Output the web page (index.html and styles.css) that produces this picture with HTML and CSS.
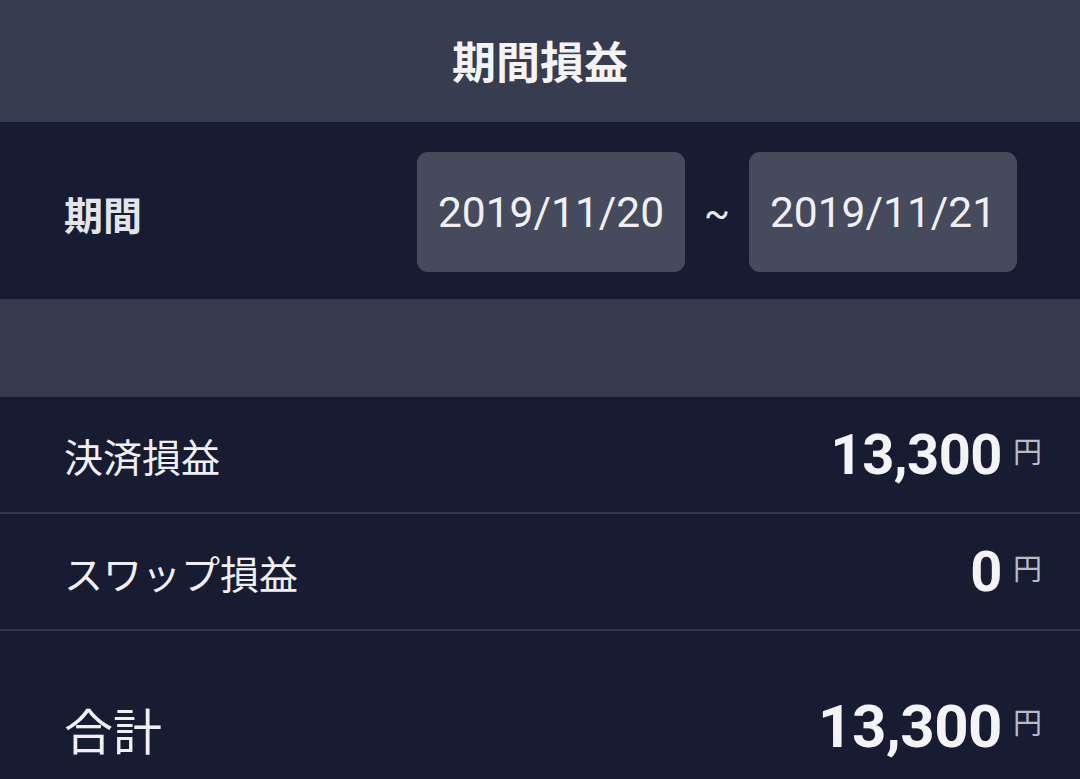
FILE: index.html
```html
<!DOCTYPE html>
<html lang="ja">
<head>
<meta charset="utf-8">
<link rel="stylesheet" href="styles.css">
</head>
<body>
<div class="page">
  <header class="header"><h1 class="title">期間損益</h1></header>
  <section class="period">
    <div class="period-label">期間</div>
    <div class="dates">
      <div class="date-box">2019/11/20</div>
      <div class="tilde">~</div>
      <div class="date-box">2019/11/21</div>
    </div>
  </section>
  <div class="band"></div>
  <section class="rows">
    <div class="row">
      <div class="row-label">決済損益</div>
      <div class="amount"><span class="num">13,300</span><span class="yen">円</span></div>
    </div>
    <div class="row">
      <div class="row-label">スワップ損益</div>
      <div class="amount"><span class="num">0</span><span class="yen">円</span></div>
    </div>
    <div class="row total">
      <div class="row-label">合計</div>
      <div class="amount"><span class="num">13,300</span><span class="yen">円</span></div>
    </div>
  </section>
</div>
</body>
</html>
```
FILE: styles.css
```css
html, body {
  margin: 0;
  padding: 0;
  background: #171c33;
}
body {
  font-family: "Roboto", "Noto Sans CJK JP", sans-serif;
  color: #f2f2f6;
}
.page {
  width: 1080px;
  height: 779px;
  overflow: hidden;
  display: flex;
  flex-direction: column;
}
.page > * {
  flex-shrink: 0;
}
.header {
  height: 122px;
  background: #373d50;
  display: flex;
  align-items: center;
  justify-content: center;
}
.title {
  margin: 0;
  font-size: 44px;
  font-weight: 700;
  color: #f4f4f7;
  padding-bottom: 2px;
}
.period {
  height: 177px;
  background: #171c33;
  display: flex;
  align-items: center;
  justify-content: space-between;
  padding: 0 63px 0 64px;
}
.period-label {
  font-size: 39px;
  font-weight: 700;
  color: #e2e4ec;
  margin-top: 4px;
}
.dates {
  display: flex;
  align-items: center;
}
.date-box {
  width: 268px;
  height: 120px;
  background: #454a5c;
  border-radius: 11px;
  display: flex;
  align-items: center;
  justify-content: center;
  font-size: 42.5px;
  color: #f0f0f4;
  margin-top: 3px;
}
.tilde {
  width: 64px;
  text-align: center;
  font-size: 38px;
  color: #e8e8ee;
  margin-top: 6px;
}
.band {
  height: 98px;
  background: #363b4e;
}
.rows {
  display: flex;
  flex-direction: column;
}
.row {
  height: 117px;
  box-sizing: border-box;
  display: flex;
  align-items: center;
  justify-content: space-between;
  padding: 0 38px 0 64px;
  border-bottom: 2px solid #343949;
  flex-shrink: 0;
}
.row-label {
  font-size: 39px;
  color: #f0f0f4;
}
.amount {
  display: flex;
  align-items: baseline;
}
.num {
  font-size: 56px;
  font-weight: 700;
  color: #f4f4f7;
  letter-spacing: -0.5px;
}
.yen {
  font-size: 29px;
  color: #b8bbc6;
  margin-left: 11px;
  position: relative;
  top: -11px;
}
.row.total {
  height: 150px;
  border-bottom: none;
  align-items: flex-start;
  padding-top: 60px;
}
.row.total .row-label {
  font-size: 49px;
  margin-top: 2px;
}
.row.total .num {
  font-size: 60px;
}
.row.total .yen {
  top: -13px;
}
```
